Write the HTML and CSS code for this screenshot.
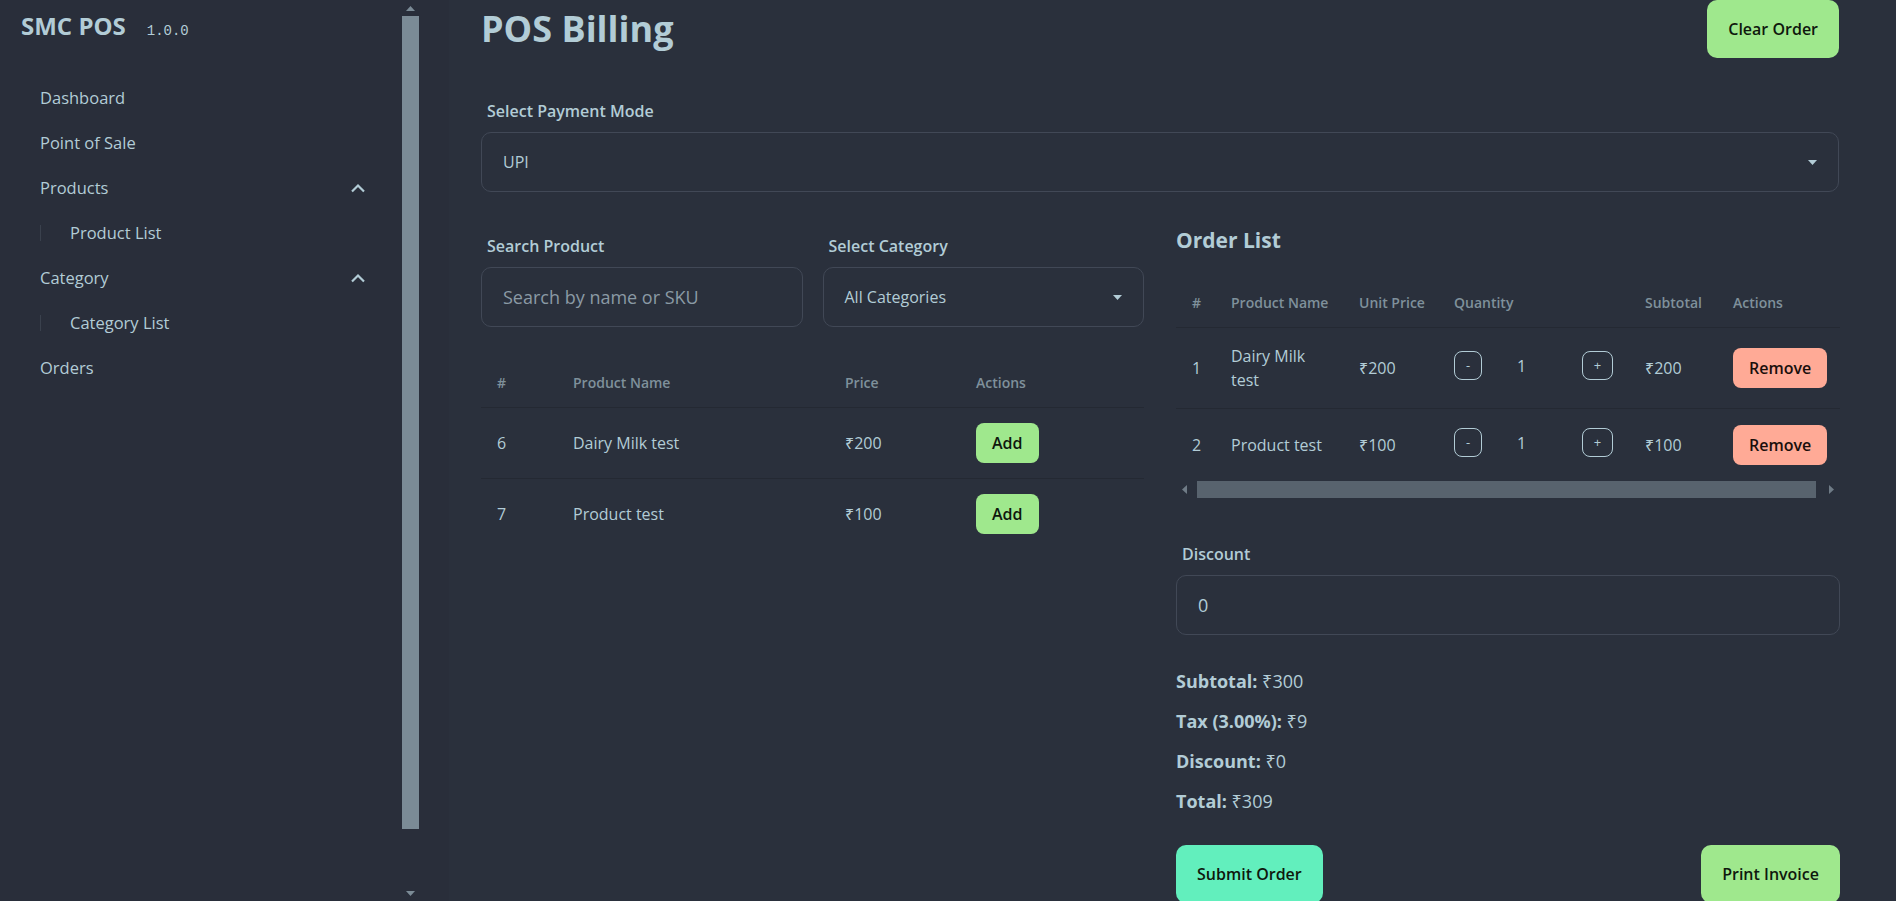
FILE: index.html
```html
<!DOCTYPE html>
<html lang="en">
<head>
<meta charset="utf-8">
<title>SMC POS - POS Billing</title>
<link rel="stylesheet" href="styles.css">
</head>
<body>
<div class="app">
  <aside class="sidebar">
    <div class="side-inner">
      <div class="brand"><span class="brand-name">SMC POS</span><span class="ver">1.0.0</span></div>
      <ul class="menu">
        <li class="menu-item">Dashboard</li>
        <li class="menu-item">Point of Sale</li>
        <li class="menu-item">Products
          <svg class="chev" width="16" height="10" viewBox="0 0 16 10"><path d="M2 8.5L8 2.5L14 8.5" fill="none" stroke="#b2ccd6" stroke-width="2.2"/></svg>
        </li>
        <li class="sub-item"><span class="sub-line"></span>Product List</li>
        <li class="menu-item">Category
          <svg class="chev" width="16" height="10" viewBox="0 0 16 10"><path d="M2 8.5L8 2.5L14 8.5" fill="none" stroke="#b2ccd6" stroke-width="2.2"/></svg>
        </li>
        <li class="sub-item"><span class="sub-line"></span>Category List</li>
        <li class="menu-item">Orders</li>
      </ul>
    </div>
    <div class="vscroll">
      <div class="varr"><svg width="9" height="5" viewBox="0 0 9 5"><path d="M0 5L4.5 0L9 5Z" fill="#7b8b96"/></svg></div>
      <div class="vthumb"></div>
      <div class="vspace"></div>
      <div class="varr"><svg width="9" height="5" viewBox="0 0 9 5"><path d="M0 0L4.5 5L9 0Z" fill="#7b8b96"/></svg></div>
    </div>
  </aside>

  <main class="main">
    <div class="topbar">
      <h1 class="title">POS Billing</h1>
      <button class="btn btn-primary">Clear Order</button>
    </div>

    <div class="payment">
      <label class="field-label">Select Payment Mode</label>
      <div class="control">
        <span>UPI</span>
        <svg width="9" height="5" viewBox="0 0 9 5"><path d="M0 0H9L4.5 5Z" fill="#b2ccd6"/></svg>
      </div>
    </div>

    <div class="grid">
      <section class="left">
        <div class="filters">
          <div>
            <label class="field-label">Search Product</label>
            <input class="control lg" type="text" placeholder="Search by name or SKU">
          </div>
          <div>
            <label class="field-label">Select Category</label>
            <div class="control">
              <span>All Categories</span>
              <svg width="9" height="5" viewBox="0 0 9 5"><path d="M0 0H9L4.5 5Z" fill="#b2ccd6"/></svg>
            </div>
          </div>
        </div>

        <table class="tbl products">
          <colgroup><col class="c1"><col class="c2"><col class="c3"><col class="c4"></colgroup>
          <thead>
            <tr><th>#</th><th>Product Name</th><th>Price</th><th>Actions</th></tr>
          </thead>
          <tbody>
            <tr><td>6</td><td>Dairy Milk test</td><td>₹200</td><td><button class="btn btn-sm btn-primary">Add</button></td></tr>
            <tr><td>7</td><td>Product test</td><td>₹100</td><td><button class="btn btn-sm btn-primary">Add</button></td></tr>
          </tbody>
        </table>
      </section>

      <section class="right">
        <h2 class="order-title">Order List</h2>
        <table class="tbl orders">
          <colgroup><col class="o1"><col class="o2"><col class="o3"><col class="o4"><col class="o5"><col class="o6"></colgroup>
          <thead>
            <tr><th>#</th><th>Product Name</th><th>Unit Price</th><th>Quantity</th><th>Subtotal</th><th>Actions</th></tr>
          </thead>
          <tbody>
            <tr>
              <td>1</td><td>Dairy Milk test</td><td>₹200</td>
              <td><div class="qty"><button class="qbtn">-</button><span class="qval">1</span><button class="qbtn plus">+</button></div></td>
              <td>₹200</td><td><button class="btn btn-sm btn-error">Remove</button></td>
            </tr>
            <tr>
              <td>2</td><td>Product test</td><td>₹100</td>
              <td><div class="qty"><button class="qbtn">-</button><span class="qval">1</span><button class="qbtn plus">+</button></div></td>
              <td>₹100</td><td><button class="btn btn-sm btn-error">Remove</button></td>
            </tr>
          </tbody>
        </table>
        <div class="hscroll">
          <div class="harr"><svg width="5" height="9" viewBox="0 0 5 9"><path d="M5 0L0 4.5L5 9Z" fill="#6f7b86"/></svg></div>
          <div class="htrack"><div class="hthumb"></div></div>
          <div class="harr"><svg width="5" height="9" viewBox="0 0 5 9"><path d="M0 0L5 4.5L0 9Z" fill="#6f7b86"/></svg></div>
        </div>

        <div class="discount">
          <label class="field-label">Discount</label>
          <input class="control lg" type="text" value="0">
        </div>

        <div class="totals">
          <p><b>Subtotal:</b> ₹300</p>
          <p><b>Tax (3.00%):</b> ₹9</p>
          <p><b>Discount:</b> ₹0</p>
          <p><b>Total:</b> ₹309</p>
        </div>

        <div class="actions">
          <button class="btn btn-success">Submit Order</button>
          <button class="btn btn-primary">Print Invoice</button>
        </div>
      </section>
    </div>
  </main>
</div>
</body>
</html>
```

FILE: styles.css
```css
* { box-sizing: border-box; }

html, body {
  margin: 0;
  height: 100%;
}

body {
  background: #2a303c;
  color: #b2ccd6;
  font-family: "Open Sans", "Noto Sans", "DejaVu Sans", sans-serif;
  overflow: hidden;
}

.app {
  display: flex;
  height: 901px;
  overflow: hidden;
}

/* Sidebar */
.sidebar {
  flex: 0 0 449px;
  display: flex;
  background: #292e3a;
}

.side-inner {
  flex: 0 0 402px;
}

.brand {
  padding: 10px 0 0 21px;
  line-height: 32px;
  white-space: nowrap;
}

.brand-name {
  font-size: 24px;
  font-weight: 700;
}

.ver {
  font-family: "Liberation Mono", "DejaVu Sans Mono", monospace;
  font-size: 14px;
  margin-left: 21px;
}

.menu {
  list-style: none;
  margin: 28px 0 0;
  padding: 0;
}

.menu-item {
  display: flex;
  align-items: center;
  justify-content: space-between;
  height: 45px;
  padding: 0 36px 0 40px;
  font-size: 16.5px;
}

.sub-item {
  display: flex;
  align-items: center;
  height: 45px;
  padding-left: 40px;
  font-size: 16.5px;
}

.sub-line {
  width: 1px;
  height: 16px;
  background: #3a414d;
  margin-right: 29px;
}

.vscroll {
  flex: 0 0 17px;
  display: flex;
  flex-direction: column;
}

.varr {
  height: 16px;
  display: flex;
  align-items: center;
  justify-content: center;
}

.vthumb {
  height: 813px;
  background: #7b8b96;
}

.vspace { flex: 1; }

/* Main */
.main {
  flex: 1;
  min-width: 0;
  padding: 0 57px 0 32px;
}

.topbar {
  display: flex;
  justify-content: space-between;
  align-items: center;
  height: 58px;
}

.title {
  margin: 0;
  font-size: 36px;
  font-weight: 700;
  line-height: 1.2;
}

.btn {
  height: 58px;
  padding: 0 21px;
  border: none;
  border-radius: 10px;
  font-family: inherit;
  font-size: 16px;
  font-weight: 600;
  color: #0f180d;
  cursor: pointer;
}

.btn-primary { background: #9fe88d; }
.btn-success { background: #62efbd; }
.btn-error { background: #ffaa96; color: #1a0f0c; }

.btn-sm {
  height: 40px;
  padding: 0 16px;
  border-radius: 8px;
}

.field-label {
  display: block;
  font-size: 16px;
  font-weight: 600;
  line-height: 24px;
  padding: 0 6px;
  margin-bottom: 9px;
}

.payment { margin-top: 41px; }

.control {
  width: 100%;
  height: 60px;
  border: 1px solid #414856;
  border-radius: 10px;
  padding: 0 21px;
  display: flex;
  align-items: center;
  justify-content: space-between;
  font-family: inherit;
  font-size: 16px;
  color: #b2ccd6;
  background: transparent;
  outline: none;
}

.control.lg { font-size: 18px; }

.control::placeholder { color: #8a9aa5; }

.grid {
  display: grid;
  grid-template-columns: 1fr 1fr;
  gap: 32px;
  margin-top: 34px;
}

.filters {
  display: grid;
  grid-template-columns: 1fr 1fr;
  gap: 20px;
}

.filters .field-label { padding-top: 8px; }

/* Tables */
.tbl {
  width: 100%;
  border-collapse: collapse;
  table-layout: fixed;
}

.tbl th {
  text-align: left;
  font-size: 14px;
  font-weight: 600;
  color: #7f909b;
  padding: 14px 16px;
  line-height: 20px;
  white-space: nowrap;
  border-bottom: 1px solid #242933;
}

.tbl td {
  padding: 15px 16px;
  font-size: 16px;
  line-height: 24px;
  border-bottom: 1px solid #242933;
  vertical-align: middle;
}

.tbl tbody tr:last-child td { border-bottom: none; }

.products { margin-top: 32px; }
.products .c1 { width: 76px; }
.products .c2 { width: 272px; }
.products .c3 { width: 131px; }
.products .c4 { width: 184px; }

.order-title {
  margin: 0;
  font-size: 21px;
  font-weight: 700;
  line-height: 28px;
}

.orders { margin-top: 25px; }
.orders td { padding: 16px; }
.orders .o1 { width: 39px; }
.orders .o2 { width: 128px; }
.orders .o3 { width: 95px; }
.orders .o4 { width: 191px; }
.orders .o5 { width: 88px; }
.orders .o6 { width: 123px; }

.qty {
  display: flex;
  align-items: center;
  margin-top: -5px;
}

.qbtn {
  width: 28px;
  height: 29px;
  padding: 0;
  border: 1px solid #b2ccd6;
  border-radius: 8px;
  background: transparent;
  color: #b2ccd6;
  font-family: inherit;
  font-size: 13px;
  line-height: 1;
}

.qbtn.plus { width: 31px; }

.qval {
  width: 100px;
  padding-left: 35px;
}

.hscroll {
  display: flex;
  align-items: center;
  height: 17px;
}

.harr {
  flex: 0 0 17px;
  display: flex;
  justify-content: center;
}

.htrack {
  flex: 1;
  padding: 0 7px 0 4px;
}

.hthumb {
  height: 17px;
  background: #58636e;
}

.discount { margin-top: 44px; }

.totals { margin-top: 32px; }

.totals p {
  margin: 0 0 12px;
  font-size: 18px;
  line-height: 28px;
}

.totals b { font-weight: 700; }

.actions {
  display: flex;
  justify-content: space-between;
  margin-top: 30px;
}
```
